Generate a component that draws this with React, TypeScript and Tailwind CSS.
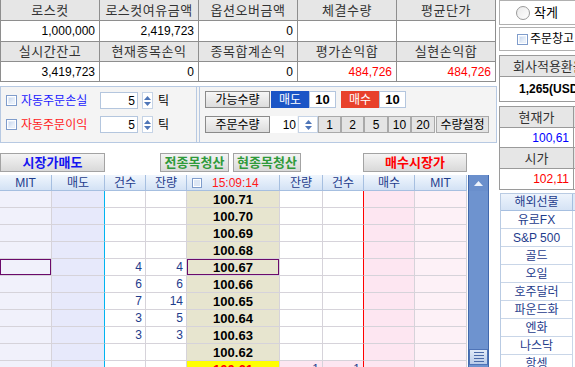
import React from 'react';

const HEAD_1 = ['로스컷', '로스컷여유금액', '옵션오버금액', '체결수량', '평균단가'];
const VAL_1 = ['1,000,000', '2,419,723', '0', '', ''];
const HEAD_2 = ['실시간잔고', '현재종목손익', '종목합계손익', '평가손익합', '실현손익합'];
const VAL_2 = ['3,419,723', '0', '0', '484,726', '484,726'];

const QTY_BTNS = [
  { label: '1', w: 'w-[23px]' },
  { label: '2', w: 'w-[23px]' },
  { label: '5', w: 'w-[24px]' },
  { label: '10', w: 'w-[23px]' },
  { label: '20', w: 'w-[24px]' },
];

type Row = { p: string; sc?: string; sq?: string; bq?: string; bc?: string; sel?: boolean; cur?: boolean };

const ROWS: Row[] = [
  { p: '100.71' },
  { p: '100.70' },
  { p: '100.69' },
  { p: '100.68' },
  { p: '100.67', sc: '4', sq: '4', sel: true },
  { p: '100.66', sc: '6', sq: '6' },
  { p: '100.65', sc: '7', sq: '14' },
  { p: '100.64', sc: '3', sq: '5' },
  { p: '100.63', sc: '3', sq: '3' },
  { p: '100.62' },
  { p: '100.61', bq: '1', bc: '1', cur: true },
];

const MARKETS = ['유로FX', 'S&P 500', '골드', '오일', '호주달러', '파운드화', '엔화', '나스닥', '항셍'];

const CheckBox = () => (
  <span className="flex-shrink-0 w-[11px] h-[11px] border border-[#7f9ccb] bg-white p-[1px]">
    <span className="block w-full h-full bg-gradient-to-br from-[#c9d8ee] to-[#f4f8fd] border border-[#e6eef9]" />
  </span>
);

const Spinner = ({ w }: { w: string }) => (
  <div className={`${w} h-[17px] bg-white border border-[#c5d3e6] flex flex-col items-center justify-center gap-[2px]`}>
    <svg width="7" height="4" viewBox="0 0 7 4"><path d="M3.5 0L7 4H0z" fill="#4f76b8" /></svg>
    <svg width="7" height="4" viewBox="0 0 7 4"><path d="M0 0h7L3.5 4z" fill="#4f76b8" /></svg>
  </div>
);

const TopTable = () => (
  <div className="w-[496px] grid grid-cols-[98px_98px_98px_98px_98px] grid-rows-[20px_20px_19px_19px] gap-px bg-[#8e8e8e] border-x border-b border-[#8e8e8e]">
    {HEAD_1.map(h => (
      <div key={h} className="bg-[#e6e6e6] flex items-center justify-center text-[13px] text-[#333] tracking-[0.5px]">{h}</div>
    ))}
    {VAL_1.map((v, i) => (
      <div key={`v1${i}`} className="bg-white flex items-center justify-end pr-[4px] text-[12px] text-black">{v}</div>
    ))}
    {HEAD_2.map(h => (
      <div key={h} className="bg-[#e6e6e6] flex items-center justify-center text-[13px] text-[#333] tracking-[0.5px]">{h}</div>
    ))}
    {VAL_2.map((v, i) => (
      <div key={`v2${i}`} className={`bg-white flex items-center justify-end pr-[4px] text-[12px] ${i >= 3 ? 'text-[#ff0000]' : 'text-black'}`}>{v}</div>
    ))}
  </div>
);

const GrayBtn = ({ children, className }: { children: React.ReactNode; className: string }) => (
  <div className={`${className} h-[17px] flex items-center justify-center bg-gradient-to-b from-[#f6f6f6] to-[#dcdcdc] border border-[#8a8a8a] text-[12px] text-black`}>
    {children}
  </div>
);

const SettingsPanel = () => (
  <div className="mt-[4px] w-[497px] h-[57px] border border-[#b7c9e2] bg-[#f4f4f4] flex">
    <div className="w-[196px] border-r border-[#b7c9e2] pl-[5px] pt-[5px] flex flex-col gap-[7px]">
      {[
        { label: '자동주문손실', color: 'text-[#1a1aff]' },
        { label: '자동주문이익', color: 'text-[#ff1a1a]' },
      ].map(r => (
        <div key={r.label} className="flex items-center h-[17px]">
          <CheckBox />
          <span className={`ml-[4px] w-[79px] text-[12px] ${r.color}`}>{r.label}</span>
          <div className="w-[38px] h-[17px] bg-white border border-[#b4c6de] flex items-center justify-end pr-[2px] text-[12px] text-black">5</div>
          <div className="ml-[4px]"><Spinner w="w-[11px]" /></div>
          <span className="ml-[5px] text-[12px] text-black">틱</span>
        </div>
      ))}
    </div>
    <div className="flex-1 ml-[2px] border-l border-[#b7c9e2] pl-[5px] pt-[4px] flex flex-col gap-[8px]">
      <div className="flex items-center h-[17px]">
        <GrayBtn className="w-[65px]">가능수량</GrayBtn>
        <div className="ml-[1px] w-[38px] h-[17px] bg-[#1b55c6] text-white text-[12px] flex items-center justify-center">매도</div>
        <div className="w-[27px] h-[17px] bg-white border border-[#b4c6de] text-[13px] font-bold text-black flex items-center justify-center">10</div>
        <div className="ml-[5px] w-[38px] h-[17px] bg-[#e8412b] text-white text-[12px] flex items-center justify-center">매수</div>
        <div className="w-[27px] h-[17px] bg-white border border-[#b4c6de] text-[13px] font-bold text-black flex items-center justify-center">10</div>
      </div>
      <div className="flex items-center h-[17px]">
        <GrayBtn className="w-[65px]">주문수량</GrayBtn>
        <div className="w-[27px] h-[17px] bg-white flex items-center justify-end pr-[1px] text-[12px] text-black">10</div>
        <div className="ml-[1px]"><Spinner w="w-[20px]" /></div>
        <div className="flex">
          {QTY_BTNS.map(b => (
            <div key={b.label} className={`${b.w} h-[17px] bg-[#e4e4e4] border border-[#a9a9a9] text-[12px] text-black flex items-center justify-center`}>{b.label}</div>
          ))}
        </div>
        <div className="ml-[1px] w-[53px] h-[17px] bg-[#e4e4e4] border border-[#a9a9a9] text-[12px] text-black flex items-center justify-center">수량설정</div>
      </div>
    </div>
  </div>
);

const ActionBtn = ({ label, className, color }: { label: string; className: string; color: string }) => (
  <div className={`${className} h-[19px] flex items-center justify-center bg-gradient-to-b from-[#f4f4f4] to-[#d9d9d9] border border-[#a3a3a3] text-[13px] font-bold ${color}`}>
    {label}
  </div>
);

const COLS = [
  { w: 'w-[52px]', bg: 'bg-[#f1f1fb]', border: 'border-r-[#d6d3da]' },
  { w: 'w-[53px]', bg: 'bg-[#e7e9fb]', border: 'border-r-[#00b4f0]' },
  { w: 'w-[41px]', bg: 'bg-white', border: 'border-r-[#d6d3da]' },
  { w: 'w-[41px]', bg: 'bg-white', border: 'border-r-[#d6d3da]' },
  { w: 'w-[93px]', bg: 'bg-[#e7e5cf]', border: 'border-r-[#d6d3da]' },
  { w: 'w-[43px]', bg: 'bg-white', border: 'border-r-[#d6d3da]' },
  { w: 'w-[41px]', bg: 'bg-white', border: 'border-r-[#ff0000]' },
  { w: 'w-[51px]', bg: 'bg-[#fde6f1]', border: 'border-r-[#d6d3da]' },
  { w: 'w-[52px]', bg: 'bg-[#fdf1f7]', border: 'border-r-[#d6d3da]' },
];

const HEADS = ['MIT', '매도', '건수', '잔량', '', '잔량', '건수', '매수', 'MIT'];

const HogaGrid = () => (
  <div className="mt-[3px] flex">
    <div className="w-[467px] flex-shrink-0">
      <div className="flex h-[16px]">
        {HEADS.map((h, i) => (
          <div key={i} className={`${COLS[i].w} h-[16px] border-r border-b border-[#a6bfe0] bg-gradient-to-b from-[#f0f6fd] to-[#d3e2f5] flex items-center justify-center text-[12px] text-[#1e3c8c]`}>
            {i === 4 ? (
              <span className="flex items-center gap-[10px] w-full pl-[5px]">
                <span className="w-[10px] h-[10px] border border-[#7f9ccb] bg-white p-[1px]">
                  <span className="block w-full h-full bg-[#dde7f5]" />
                </span>
                <span className="text-[#ff1a1a]">15:09:14</span>
              </span>
            ) : h}
          </div>
        ))}
      </div>
      {ROWS.map(r => {
        const vals = ['', '', r.sc ?? '', r.sq ?? '', r.p, r.bq ?? '', r.bc ?? '', '', ''];
        return (
          <div key={r.p} className="flex h-[17px]">
            {COLS.map((c, i) => {
              let bg = c.bg;
              if (r.cur && i === 4) bg = 'bg-[#ffff00]';
              if (r.cur && (i === 5 || i === 6)) bg = 'bg-[#fde6f1]';
              const sel = r.sel && (i === 0 || i === 4);
              const base = `${c.w} ${bg} border-r border-b border-b-[#d6d3da] ${c.border} flex items-center ${sel ? 'shadow-[inset_0_0_0_1px_#6b0a6b]' : ''}`;
              if (i === 4) {
                return (
                  <div key={i} className={`${base} justify-center text-[13px] font-bold ${r.cur ? 'text-[#ff0000]' : 'text-black'}`}>
                    {vals[i]}
                  </div>
                );
              }
              return (
                <div key={i} className={`${base} justify-end pr-[3px] text-[12px] text-[#1e3c8c]`}>
                  {vals[i]}
                </div>
              );
            })}
          </div>
        );
      })}
    </div>
    <div className="ml-[1px] w-[21px] h-[192px] flex-shrink-0 bg-[#6e93cf] border-x border-[#4269ad] flex flex-col">
      <div className="h-[16px] flex items-center justify-center bg-[#6a8fcc]">
        <svg width="9" height="5" viewBox="0 0 9 5"><path d="M4.5 0L9 5H0z" fill="#eef3fb" /></svg>
      </div>
      <div className="mt-auto mb-[2px] h-[16px] border border-[#4f74b7] bg-gradient-to-b from-[#e1eaf7] to-[#b8cbe9] flex flex-col items-center justify-center gap-[2px]">
        {[0, 1, 2, 3].map(k => (
          <span key={k} className="block w-[10px] h-px bg-[#4a6aa8]" />
        ))}
      </div>
    </div>
  </div>
);

const SidePanel = () => (
  <div className="ml-[2px] w-[76px] overflow-hidden flex-shrink-0">
    <div className="w-[110px] h-[25px] border border-[#b0b0b0] flex items-center pl-[16px]">
      <span className="w-[14px] h-[14px] rounded-full border border-[#9a9a9a] bg-gradient-to-br from-[#eaeaea] to-white" />
      <span className="ml-[4px] text-[13px] text-black">작게</span>
    </div>
    <div className="mt-[2px] w-[110px] h-[24px] border border-[#b0b0b0] flex items-center pl-[17px]">
      <CheckBox />
      <span className="ml-[2px] text-[12px] text-black whitespace-nowrap">주문창고</span>
    </div>
    <div className="mt-[4px] w-[110px]">
      <div className="h-[22px] bg-[#e6e6e6] border border-[#9a9a9a] flex items-center pl-[13px] text-[13px] text-[#333] whitespace-nowrap">회사적용환율</div>
      <div className="h-[25px] bg-white border-x border-b border-[#9a9a9a] flex items-center pl-[19px] text-[12px] font-bold text-black whitespace-nowrap">1,265(USD)</div>
    </div>
    <div className="mt-[4px] w-[110px] grid grid-cols-[74px_36px] grid-rows-[21px_20px_21px_21px] border-t border-l border-[#9a9a9a]">
      {[
        { h: '현재가', v: '100,61', c: 'text-[#0000ff]' },
        { h: '시가', v: '102,11', c: 'text-[#ff0000]' },
      ].map(r => (
        <React.Fragment key={r.h}>
          <div className="bg-[#e6e6e6] border-r border-b border-[#9a9a9a] flex items-center justify-center text-[13px] text-[#333]">{r.h}</div>
          <div className="bg-[#e6e6e6] border-r border-b border-[#9a9a9a]" />
          <div className={`bg-white border-r border-b border-[#9a9a9a] flex items-center justify-end pr-[4px] text-[12px] ${r.c}`}>{r.v}</div>
          <div className="bg-white border-r border-b border-[#9a9a9a]" />
        </React.Fragment>
      ))}
    </div>
    <div className="mt-[3px] ml-[1px] w-[110px] flex">
      <div className="w-[73px] border-l border-t border-[#b9cbe3]">
        <div className="h-[17px] bg-gradient-to-b from-[#eef4fc] to-[#d5e3f5] border-r border-b border-[#a6bfe0] flex items-center justify-center text-[12px] text-[#1e3c8c]">해외선물</div>
        {MARKETS.map(m => (
          <div key={m} className="h-[18px] bg-white border-r border-b border-[#c9d6e8] flex items-center justify-center text-[12px] text-[#1e3c8c]">{m}</div>
        ))}
      </div>
      <div className="w-[30px] border-t border-[#b9cbe3]">
        <div className="h-[17px] bg-[#dfe9f7] border-b border-[#a6bfe0]" />
      </div>
    </div>
  </div>
);

export default function App() {
  return (
    <div className="w-[575px] h-[367px] overflow-hidden bg-white flex items-start font-['Liberation_Sans','Noto_Sans_CJK_KR',sans-serif] leading-none">
      <div className="w-[497px] flex-shrink-0">
        <TopTable />
        <SettingsPanel />
        <div className="mt-[10px] flex">
          <ActionBtn label="시장가매도" className="w-[105px]" color="text-[#1414f0]" />
          <ActionBtn label="전종목청산" className="ml-[55px] w-[69px]" color="text-[#2f9a3a]" />
          <ActionBtn label="현종목청산" className="ml-[4px] w-[68px]" color="text-[#2f9a3a]" />
          <ActionBtn label="매수시장가" className="ml-[62px] w-[104px]" color="text-[#ff0000]" />
        </div>
        <HogaGrid />
      </div>
      <SidePanel />
    </div>
  );
}
